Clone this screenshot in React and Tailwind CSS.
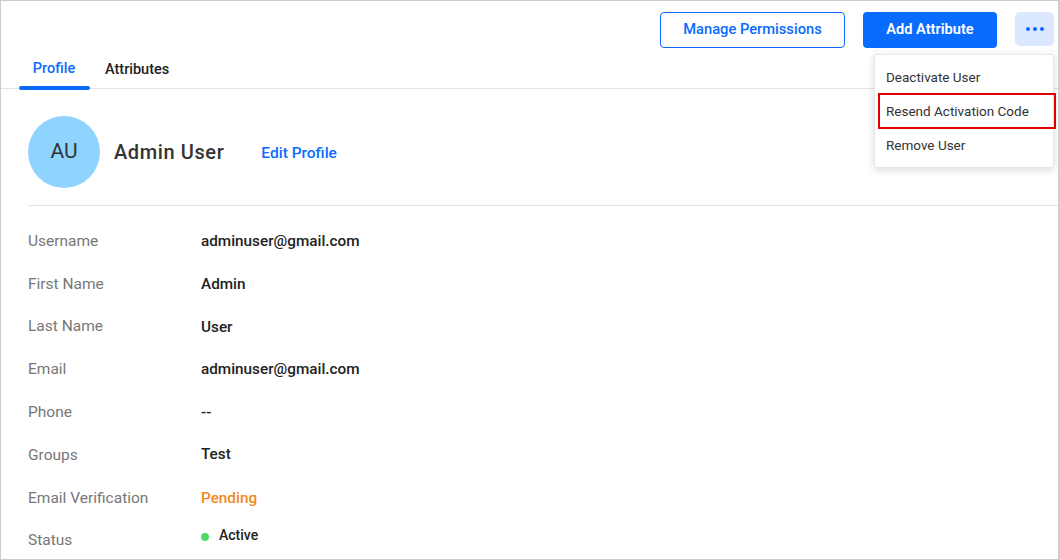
import React from "react";

const rows = [
  { label: "Username", value: "adminuser@gmail.com" },
  { label: "First Name", value: "Admin" },
  { label: "Last Name", value: "User" },
  { label: "Email", value: "adminuser@gmail.com" },
  { label: "Phone", value: "--" },
  { label: "Groups", value: "Test", up: true },
  { label: "Email Verification", value: "Pending", pending: true },
  { label: "Status", value: "Active", status: true },
];

export default function App() {
  return (
    <div
      className="relative w-[1059px] h-[560px] overflow-hidden border border-[#cccccc] bg-white text-[#333333]"
      style={{ fontFamily: "Roboto, 'Liberation Sans', sans-serif" }}
    >
      {/* top action bar */}
      <div className="flex justify-end items-center gap-[18px] pr-[4px] pt-[11px] h-[47px]">
        <button className="h-[36px] w-[185px] rounded-[4px] border border-[#0a6cff] text-[#0a6cff] text-[14.7px] font-medium pb-[1px]">
          Manage Permissions
        </button>
        <button className="h-[36px] w-[134px] rounded-[4px] bg-[#0a6cff] text-white text-[14.6px] font-semibold pb-[1px]">
          Add Attribute
        </button>
        <button className="h-[34px] w-[39px] rounded-[5px] bg-[#dbe8ff] flex items-center justify-center gap-[3px] -mt-[2px]">
          <span className="w-[4px] h-[4px] rounded-full bg-[#0a6cff]" />
          <span className="w-[4px] h-[4px] rounded-full bg-[#0a6cff]" />
          <span className="w-[4px] h-[4px] rounded-full bg-[#0a6cff]" />
        </button>
      </div>

      {/* tabs */}
      <div className="flex items-end h-[41px] border-b border-[#e3e3e3] pl-[18px]">
        <div className="relative w-[72px] h-full flex items-center justify-center text-[14.5px] font-medium text-[#0a6cff] pt-[1px] pr-[2px]">
          Profile
          <span className="absolute left-0 right-[1px] -bottom-[2px] h-[4px] rounded-full bg-[#0a6cff]" />
        </div>
        <div className="h-full flex items-center pl-[14px] text-[14.5px] font-medium text-[#222222] pt-[3px]">
          Attributes
        </div>
      </div>

      {/* profile header */}
      <div className="ml-[27px]">
        <div className="flex items-center h-[117px] pt-[10px] border-b border-[#e3e3e3]">
          <div className="w-[72px] h-[72px] rounded-full bg-[#8fd4ff] flex items-center justify-center text-[21px] text-[#333333]">
            AU
          </div>
          <div className="ml-[14px] text-[20px] font-medium text-[#333333] tracking-[0.6px]">
            Admin User
          </div>
          <div className="ml-[37px] text-[15.5px] font-medium text-[#0a6cff] mt-[4px]">
            Edit Profile
          </div>
        </div>

        {/* detail rows */}
        <div className="pt-[14px]">
          {rows.map((r) => (
            <div key={r.label} className="flex items-center h-[42.8px]">
              <div className="w-[173px] text-[15.5px] text-[#777777]">{r.label}</div>
              <div
                className={
                  "text-[15.3px] font-medium " +
                  (r.pending ? "text-[#f0891c] " : "text-[#222222] ") +
                  (r.status ? "mb-[10px] flex items-center " : "") +
                  (r.up ? "mb-[2px] " : "")
                }
              >
                {r.status ? (
                  <>
                    <span className="w-[8px] h-[8px] rounded-full bg-[#4cd964] mr-[10px] mt-[3px]" />
                    <span className="text-[14px]">Active</span>
                  </>
                ) : (
                  r.value
                )}
              </div>
            </div>
          ))}
        </div>
      </div>

      {/* dropdown menu */}
      <div className="absolute left-[873px] top-[53px] w-[180px] rounded-[3px] border border-[#e6e6e6] bg-white shadow-[0_2px_8px_rgba(0,0,0,0.15)] py-[5px]">
        <div className="h-[34px] flex items-center px-[11px] text-[13.5px] text-[#333333]">Deactivate User</div>
        <div className="h-[34px] flex items-center px-[11px] text-[13.5px] text-[#333333] outline outline-2 outline-[#e00000] -outline-offset-1 ml-[4px] pl-[7px] mr-[-2px]">
          Resend Activation Code
        </div>
        <div className="h-[34px] flex items-center px-[11px] text-[13.5px] text-[#333333]">Remove User</div>
      </div>
    </div>
  );
}
